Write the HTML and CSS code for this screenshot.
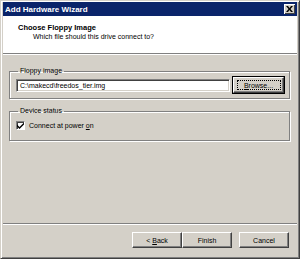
FILE: index.html
```html
<!DOCTYPE html>
<html lang="en">
<head>
    <meta charset="UTF-8">
    <title>Add Hardware Wizard</title>
    <link rel="stylesheet" href="styles.css">
</head>
<body>
    <div class="window">
        <div class="titlebar">
            <span class="title">Add Hardware Wizard</span>
            <span class="close-btn">
                <svg width="7" height="6" viewBox="0 0 7 6"><path d="M0 0h2l1.5 2 1.5-2h2l-2.5 3 2.5 3h-2l-1.5-2-1.5 2h-2l2.5-3z" fill="#000"/></svg>
            </span>
        </div>

        <div class="header">
            <h1>Choose Floppy Image</h1>
            <p>Which file should this drive connect to?</p>
        </div>

        <div class="content">
            <fieldset class="group">
                <legend>Floppy image</legend>
                <div class="file-row">
                    <div class="textbox">C:\makecd\freedos_tier.img</div>
                    <button class="btn btn-focus"><span class="focus-ring"><span><u>B</u>rowse...</span></span></button>
                </div>
            </fieldset>

            <fieldset class="group">
                <legend>Device status</legend>
                <label class="check-row">
                    <span class="checkbox">
                        <svg width="7" height="7" viewBox="0 0 7 7"><path d="M0 2.5l2.5 2.5 4.5-4.5v2l-4.5 4.5-2.5-2.5z" fill="#000"/></svg>
                    </span>
                    <span>Connect at power <u>o</u>n</span>
                </label>
            </fieldset>
        </div>

        <div class="footer">
            <button class="btn"><span>&lt; <u>B</u>ack</span></button>
            <button class="btn">Finish</button>
            <button class="btn btn-cancel">Cancel</button>
        </div>
    </div>
</body>
</html>
```

FILE: styles.css
```css
:root {
    --face: #d4d0c8;
    --shadow: #808080;
    --dark: #404040;
    --light: #ffffff;
    --title: #0a246a;
}

* {
    margin: 0;
    padding: 0;
    box-sizing: border-box;
}

body {
    font-family: 'Liberation Sans', Arial, sans-serif;
    font-size: 7px;
    color: #000;
    background: var(--face);
}

.window {
    width: 300px;
    height: 259px;
    display: flex;
    flex-direction: column;
    background: var(--face);
    border-top: 1px solid var(--face);
    border-left: 1px solid var(--face);
    border-right: 1px solid var(--dark);
    border-bottom: 1px solid var(--dark);
    box-shadow: inset 1px 1px 0 var(--light), inset -1px -1px 0 var(--shadow);
    padding: 1px 2px 2px 2px;
}

/* Title bar */
.titlebar {
    height: 14px;
    background: var(--title);
    color: #fff;
    display: flex;
    align-items: center;
    justify-content: space-between;
    padding: 0 2px 0 2px;
}

.title {
    font-weight: 700;
    font-size: 8px;
}

.close-btn {
    width: 11px;
    height: 10px;
    background: var(--face);
    display: flex;
    align-items: center;
    justify-content: center;
    box-shadow: inset 1px 1px 0 var(--light), inset -1px -1px 0 var(--dark);
}

/* Header */
.header {
    height: 38px;
    background: #fff;
    padding: 7px 0 0 15px;
    border-bottom: 1px solid var(--shadow);
    box-shadow: 0 1px 0 var(--light);
}

.header h1 {
    font-size: 7.5px;
    font-weight: 700;
    line-height: 9px;
}

.header p {
    padding-left: 15px;
    line-height: 9px;
}

/* Content */
.content {
    flex: 1;
    padding: 13px 7px 0 6px;
    display: flex;
    flex-direction: column;
    gap: 8px;
}

.group {
    border: 1px solid var(--shadow);
    box-shadow: 1px 1px 0 var(--light), inset 1px 1px 0 var(--light);
    padding: 0 5px 5px 6px;
}

.group legend {
    padding: 0 2px;
    margin-left: 2px;
    line-height: 8px;
}

.file-row {
    display: flex;
    align-items: center;
    gap: 2px;
    padding-top: 2px;
}

.textbox {
    flex: 1;
    height: 13px;
    background: #fff;
    border-top: 1px solid var(--shadow);
    border-left: 1px solid var(--shadow);
    border-right: 1px solid var(--light);
    border-bottom: 1px solid var(--light);
    box-shadow: inset 1px 1px 0 var(--dark), inset -1px -1px 0 var(--face);
    padding: 2px 3px;
    line-height: 8px;
}

.btn {
    font-family: inherit;
    font-size: 7px;
    color: #000;
    background: var(--face);
    border-top: 1px solid var(--light);
    border-left: 1px solid var(--light);
    border-right: 1px solid var(--dark);
    border-bottom: 1px solid var(--dark);
    box-shadow: inset -1px -1px 0 var(--shadow);
    width: 50px;
    height: 16px;
    display: flex;
    align-items: center;
    justify-content: center;
}

.btn-focus {
    width: 51px;
    outline: 1px solid #000;
    margin-left: 1px;
}

.focus-ring {
    border: 1px dotted #000;
    width: 44px;
    height: 10px;
    display: flex;
    align-items: center;
    justify-content: center;
}

.check-row {
    display: flex;
    align-items: center;
    gap: 4px;
    padding: 6px 0 5px 0;
}

.checkbox {
    width: 9px;
    height: 9px;
    background: #fff;
    border-top: 1px solid var(--shadow);
    border-left: 1px solid var(--shadow);
    border-right: 1px solid var(--light);
    border-bottom: 1px solid var(--light);
    box-shadow: inset 1px 1px 0 var(--dark);
    display: flex;
    align-items: center;
    justify-content: center;
}

/* Footer */
.footer {
    border-top: 1px solid var(--shadow);
    box-shadow: inset 0 1px 0 var(--light);
    height: 33px;
    display: flex;
    align-items: flex-start;
    padding: 8px 8px 0 0;
    justify-content: flex-end;
}

.btn-cancel {
    margin-left: 7px;
}
```
